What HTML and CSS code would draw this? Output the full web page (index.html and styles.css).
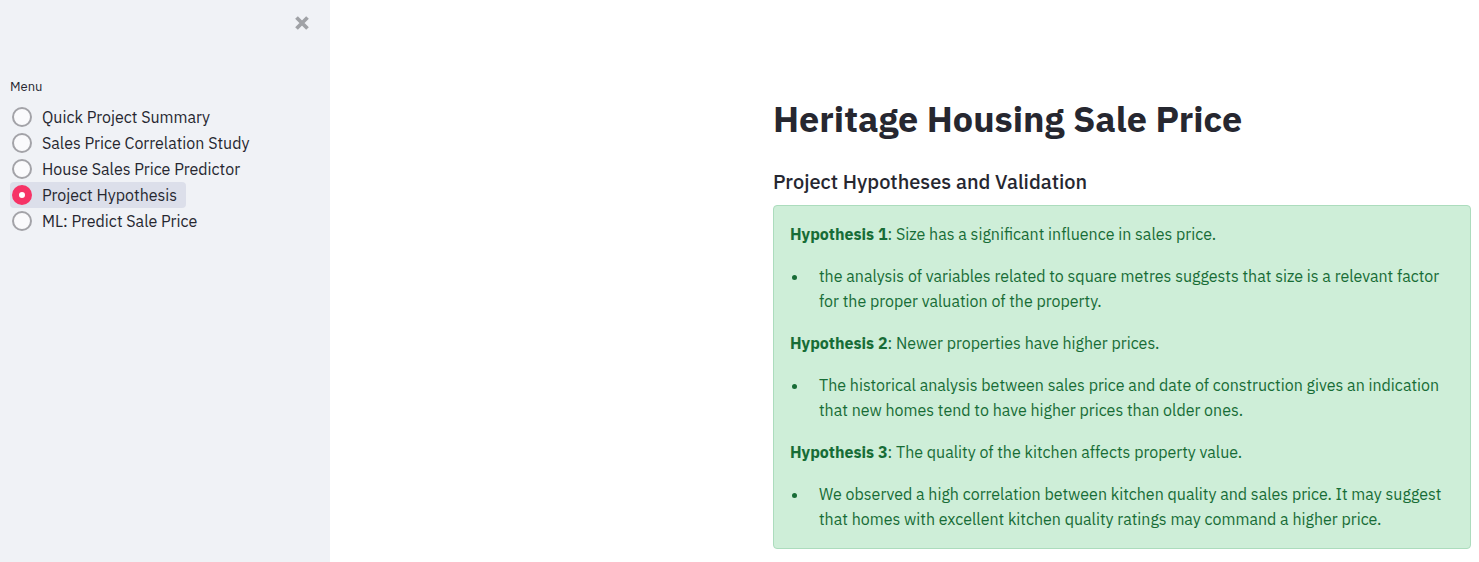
FILE: index.html
```html
<!DOCTYPE html>
<html lang="en">
<head>
<meta charset="utf-8">
<meta name="viewport" content="width=device-width, initial-scale=1">
<title>Heritage Housing Sale Price</title>
<link rel="stylesheet" href="styles.css">
</head>
<body>
<div class="app">
  <aside class="sidebar">
    <button class="close" type="button" aria-label="Close sidebar">
      <svg viewBox="0 0 16 16" width="16" height="16" aria-hidden="true"><path d="M2.5 2.5 13.5 13.5M13.5 2.5 2.5 13.5"/></svg>
    </button>
    <fieldset class="menu">
      <legend class="menu-title">Menu</legend>
      <label class="option"><input class="radio" type="radio" name="page"><span>Quick Project Summary</span></label>
      <label class="option"><input class="radio" type="radio" name="page"><span>Sales Price Correlation Study</span></label>
      <label class="option"><input class="radio" type="radio" name="page"><span>House Sales Price Predictor</span></label>
      <label class="option option-active"><input class="radio" type="radio" name="page" checked><span>Project Hypothesis</span></label>
      <label class="option"><input class="radio" type="radio" name="page"><span>ML: Predict Sale Price</span></label>
    </fieldset>
  </aside>
  <main class="main">
    <div class="content">
      <h1 class="title">Heritage Housing Sale Price</h1>
      <h2 class="subtitle">Project Hypotheses and Validation</h2>
      <section class="success">
        <p><strong>Hypothesis 1</strong>: Size has a significant influence in sales price.</p>
        <ul><li>the analysis of variables related to square metres suggests that size is a relevant factor for the proper valuation of the property.</li></ul>
        <p><strong>Hypothesis 2</strong>: Newer properties have higher prices.</p>
        <ul><li>The historical analysis between sales price and date of construction gives an indication that new homes tend to have higher prices than older ones.</li></ul>
        <p><strong>Hypothesis 3</strong>: The quality of the kitchen affects property value.</p>
        <ul><li>We observed a high correlation between kitchen quality and sales price. It may suggest that homes with excellent kitchen quality ratings may command a higher price.</li></ul>
      </section>
    </div>
  </main>
</div>
</body>
</html>
```
FILE: styles.css
```css
* { box-sizing: border-box; }
body {
  margin: 0;
  background: #fff;
  color: #262730;
  font-family: "IBM Plex Sans", "Noto Sans", sans-serif;
  font-size: 16px;
  line-height: 25px;
}
.app { display: flex; min-height: 100vh; }
.sidebar {
  flex: none;
  display: flex;
  flex-direction: column;
  width: 330px;
  padding: 15px 20px 15px 10px;
  background: #f0f2f6;
}
.close {
  align-self: flex-end;
  display: flex;
  padding: 0;
  border: 0;
  background: none;
  cursor: pointer;
}
.close svg { fill: none; stroke: #a0a2a6; stroke-width: 3.8; }
.menu {
  display: flex;
  flex-direction: column;
  align-items: flex-start;
  min-width: 0;
  margin: 45px 0 0;
  padding: 0;
  border: 0;
}
.menu-title { margin-bottom: 7px; padding: 0; font-size: 13px; line-height: 21px; }
.option {
  display: flex;
  align-items: center;
  gap: 10px;
  height: 26px;
  padding: 0 9px 0 2px;
  border-radius: 4px;
}
.option-active { background: #dcdfea; }
.radio {
  appearance: none;
  flex: none;
  width: 20px;
  height: 20px;
  margin: 0;
  border: 2px solid #a3a3a8;
  border-radius: 50%;
  background: #fafafc;
}
.radio:checked { border: 7px solid #f63366; background: #fff; }
.main { flex: 1; min-width: 0; padding: 96px 8px 13px; }
.content { max-width: 698px; margin-left: auto; }
.title { margin: 0; font-size: 36px; line-height: 46px; font-weight: 700; }
.subtitle { margin: 27px 0 10px; font-size: 20px; line-height: 26px; font-weight: 500; }
.success {
  display: grid;
  gap: 17px;
  padding: 16px;
  border: 1px solid #acdcbd;
  border-radius: 4px;
  background: #ceeed8;
  color: #176c36;
}
.success p, .success ul { margin: 0; }
.success ul { padding-left: 19px; }
.success li { padding-left: 10px; }
```
